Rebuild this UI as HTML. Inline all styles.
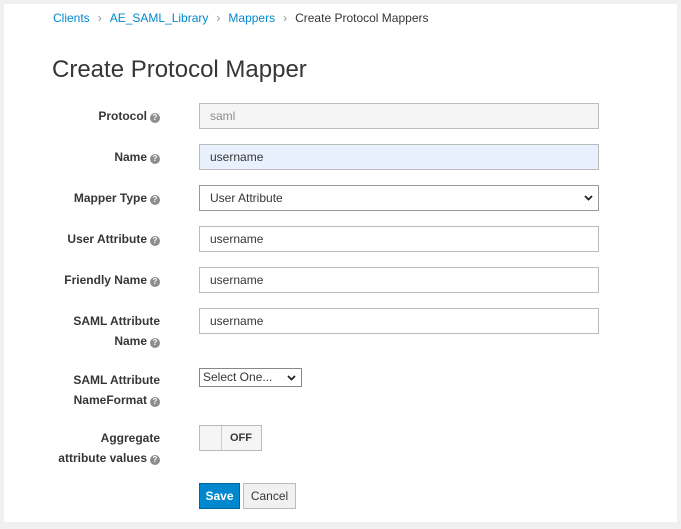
<!DOCTYPE html>
<html><head><style>
body{margin:0;width:681px;height:529px;background:#f0f0f0;font-family:"Liberation Sans",sans-serif;font-size:12px;color:#363636;position:relative;overflow:hidden}
.panel{position:absolute;left:4px;top:4px;width:673px;height:518px;background:#fff}
.a{position:absolute}
.bc{top:11px;left:53px;font-size:12px;color:#0088ce}
.bc span.s{color:#8b8d8f;margin:0 8px}
.bc span.c{color:#363636}
h1{position:absolute;left:52px;top:56px;margin:0;font-weight:300;font-size:24px;color:#363636}
.lbl{position:absolute;right:521px;font-weight:bold;text-align:right;line-height:20px;color:#363636}
.q{display:inline-block;width:10px;height:10px;border-radius:50%;background:#8b8d8f;color:#fff;font-size:8px;line-height:10px;text-align:center;vertical-align:0px;margin-left:3px}
.in{position:absolute;left:199px;width:388px;height:24px;border:1px solid #bbb;line-height:24px;padding-left:10px;background:#fff;color:#363636}
.btn{position:absolute;height:24px;line-height:24px;text-align:center;border:1px solid #bbb;background:#f1f1f1;font-weight:bold;box-sizing:content-box}
</style></head><body>
<div class="panel"></div>
<div class="a bc">Clients<span class="s">›</span>AE_SAML_Library<span class="s">›</span>Mappers<span class="s">›</span><span class="c">Create Protocol Mappers</span></div>
<h1>Create Protocol Mapper</h1>

<div class="lbl" style="top:106px">Protocol<span class="q">?</span></div>
<div class="in" style="top:103px;background:#f5f5f5;color:#8b8d8f">saml</div>

<div class="lbl" style="top:147px">Name<span class="q">?</span></div>
<div class="in" style="top:144px;background:#e8f0fe">username</div>

<div class="lbl" style="top:188px">Mapper Type<span class="q">?</span></div>
<div class="in" style="top:185px;border-color:#999">User Attribute<svg style="position:absolute;right:5px;top:9px" width="9" height="6" viewBox="0 0 9 6"><path d="M1 1L4.5 4.5L8 1" fill="none" stroke="#222" stroke-width="1.8"/></svg></div>

<div class="lbl" style="top:229px">User Attribute<span class="q">?</span></div>
<div class="in" style="top:226px">username</div>

<div class="lbl" style="top:270px">Friendly Name<span class="q">?</span></div>
<div class="in" style="top:267px">username</div>

<div class="lbl" style="top:311px">SAML Attribute<br>Name<span class="q">?</span></div>
<div class="in" style="top:308px">username</div>

<div class="lbl" style="top:370px">SAML Attribute<br>NameFormat<span class="q">?</span></div>
<div class="a" style="left:199px;top:368px;width:98px;height:17px;border:1px solid #888;line-height:17px;padding-left:3px;box-sizing:content-box">Select One...<svg style="position:absolute;right:5px;top:6px" width="9" height="6" viewBox="0 0 9 6"><path d="M1 1L4.5 4.5L8 1" fill="none" stroke="#222" stroke-width="1.8"/></svg></div>

<div class="lbl" style="top:428px">Aggregate<br>attribute values<span class="q">?</span></div>
<div class="btn" style="left:199px;top:425px;width:61px;background:#f5f5f5"><span style="position:absolute;left:21px;top:0;bottom:0;border-left:1px solid #ccc"></span><span style="position:absolute;left:30px;font-size:11px">OFF</span></div>

<div class="btn" style="left:199px;top:483px;width:39px;background:#0088ce;border-color:#00659c;color:#fff">Save</div>
<div class="btn" style="left:243px;top:483px;width:51px;font-weight:normal;color:#363636">Cancel</div>
</body></html>
